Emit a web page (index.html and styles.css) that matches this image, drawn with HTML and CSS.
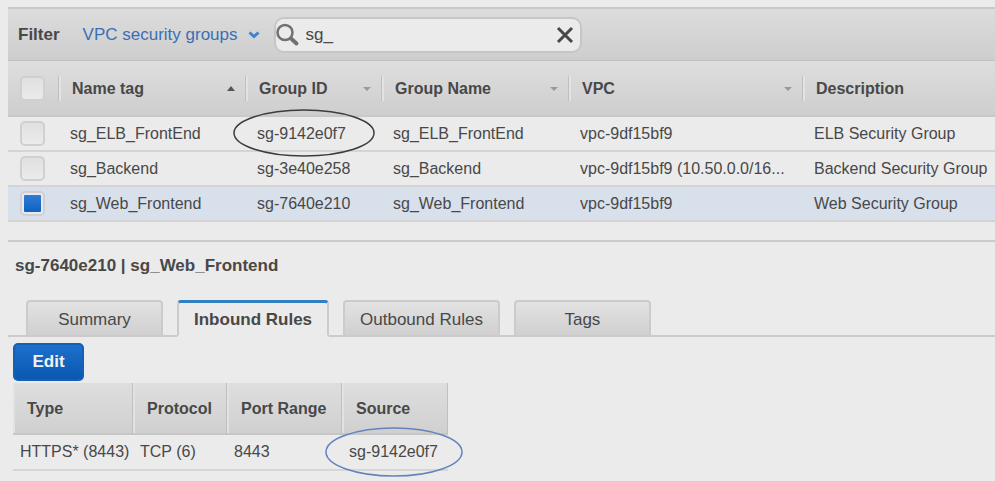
FILE: index.html
```html
<!DOCTYPE html>
<html lang="en">
<head>
<meta charset="utf-8">
<title>VPC security groups</title>
<link rel="stylesheet" href="styles.css">
</head>
<body>
<main class="console">
  <form class="filter-bar">
    <span class="filter-label">Filter</span>
    <button type="button" class="filter-type">VPC security groups
      <svg class="chevron" viewBox="0 0 12 8" aria-hidden="true"><path d="M1.5 1.5 L6 5.5 L10.5 1.5"/></svg>
    </button>
    <div class="search">
      <svg class="search-icon" viewBox="0 0 24 24" aria-hidden="true"><circle cx="9" cy="9.5" r="7.5"/><path class="handle" d="M15 15.5 L20.5 20.5"/></svg>
      <input class="search-input" type="text" value="sg_" aria-label="Search security groups">
      <button type="button" class="search-clear" aria-label="Clear search">
        <svg viewBox="0 0 18 18" aria-hidden="true"><path d="M2 2 L16 16 M16 2 L2 16"/></svg>
      </button>
    </div>
  </form>

  <table class="groups">
    <colgroup>
      <col class="col-check"><col class="col-tag"><col class="col-id"><col class="col-name"><col class="col-vpc"><col>
    </colgroup>
    <thead>
      <tr>
        <th class="check"><input type="checkbox" class="box" aria-label="Select all"></th>
        <th><div class="head">Name tag<i class="sort sort-up"></i></div></th>
        <th><div class="head">Group ID<i class="sort"></i></div></th>
        <th><div class="head">Group Name<i class="sort"></i></div></th>
        <th><div class="head">VPC<i class="sort"></i></div></th>
        <th><div class="head">Description</div></th>
      </tr>
    </thead>
    <tbody>
      <tr>
        <td class="check"><input type="checkbox" class="box" aria-label="Select sg_ELB_FrontEnd"></td>
        <td>sg_ELB_FrontEnd</td>
        <td><span class="mark">sg-9142e0f7<svg class="ring" viewBox="0 0 142 48" aria-hidden="true"><ellipse cx="71" cy="24" rx="70" ry="23"/></svg></span></td>
        <td>sg_ELB_FrontEnd</td>
        <td>vpc-9df15bf9</td>
        <td>ELB Security Group</td>
      </tr>
      <tr>
        <td class="check"><input type="checkbox" class="box" aria-label="Select sg_Backend"></td>
        <td>sg_Backend</td>
        <td>sg-3e40e258</td>
        <td>sg_Backend</td>
        <td>vpc-9df15bf9 (10.50.0.0/16...</td>
        <td>Backend Security Group</td>
      </tr>
      <tr class="selected">
        <td class="check"><input type="checkbox" class="box" checked aria-label="Select sg_Web_Frontend"></td>
        <td>sg_Web_Frontend</td>
        <td>sg-7640e210</td>
        <td>sg_Web_Frontend</td>
        <td>vpc-9df15bf9</td>
        <td>Web Security Group</td>
      </tr>
    </tbody>
  </table>

  <section class="details">
    <h2 class="title">sg-7640e210 | sg_Web_Frontend</h2>
    <div class="tabs" role="tablist">
      <button class="tab" role="tab">Summary</button>
      <button class="tab active" role="tab" aria-selected="true">Inbound Rules</button>
      <button class="tab" role="tab">Outbound Rules</button>
      <button class="tab" role="tab">Tags</button>
    </div>
    <div class="panel">
      <button class="edit">Edit</button>
      <table class="rules">
        <colgroup>
          <col class="col-type"><col class="col-protocol"><col class="col-port"><col class="col-source">
        </colgroup>
        <thead>
          <tr><th>Type</th><th>Protocol</th><th>Port Range</th><th>Source</th></tr>
        </thead>
        <tbody>
          <tr>
            <td>HTTPS* (8443)</td>
            <td>TCP (6)</td>
            <td>8443</td>
            <td><span class="mark">sg-9142e0f7<svg class="ring ring-blue" viewBox="0 0 138 50" aria-hidden="true"><ellipse cx="69" cy="25" rx="68" ry="24"/></svg></span></td>
          </tr>
        </tbody>
      </table>
    </div>
  </section>
</main>
</body>
</html>
```
FILE: styles.css
```css
* {
  box-sizing: border-box;
}

body {
  margin: 0;
  min-height: 100vh;
  background: #ebebeb;
  color: #484848;
  font: 16px/20px "Liberation Sans", Arial, sans-serif;
}

button,
input {
  font: inherit;
  color: inherit;
  margin: 0;
}

.console {
  padding: 7px 0 0 8px;
}

.filter-bar {
  display: flex;
  align-items: center;
  height: 54px;
  padding: 1px 10px 0;
  border-top: 2px solid #c8c8c8;
  border-bottom: 1px solid #c0c0c0;
  background: linear-gradient(#dcdcdd, #cecece);
}

.filter-label {
  font-size: 17px;
  font-weight: bold;
  margin-right: 23px;
}

.filter-type {
  display: flex;
  align-items: center;
  gap: 10px;
  padding: 0;
  border: 0;
  background: none;
  color: #3a6fb4;
  font-size: 17px;
  white-space: nowrap;
}

.chevron {
  width: 12px;
  height: 8px;
  fill: none;
  stroke: #3d86cf;
  stroke-width: 3;
}

.search {
  display: flex;
  align-items: center;
  width: 308px;
  height: 36px;
  margin-left: 14px;
  border: 2px solid #c6c6c6;
  border-radius: 10px;
  background: #ebebeb;
}

.search-icon {
  flex: none;
  width: 24px;
  height: 24px;
  fill: none;
  stroke: #717171;
  stroke-width: 2.5;
}

.handle {
  stroke-width: 4;
  stroke-linecap: round;
}

.search-input {
  flex: 1;
  min-width: 0;
  padding: 0 6px;
  border: 0;
  outline: 0;
  background: none;
  font-size: 17px;
}

.search-clear {
  display: flex;
  padding: 0 6px;
  border: 0;
  background: none;
}

.search-clear svg {
  width: 18px;
  height: 18px;
  fill: none;
  stroke: #484848;
  stroke-width: 3;
}

table {
  border-collapse: separate;
  border-spacing: 0;
}

th,
td {
  text-align: left;
  white-space: nowrap;
}

.groups {
  width: 100%;
  table-layout: fixed;
}

.col-check { width: 50px; }
.col-tag { width: 187px; }
.col-id { width: 136px; }
.col-name { width: 187px; }
.col-vpc { width: 234px; }

.groups th {
  height: 56px;
  padding: 1px 0 0;
  border-bottom: 2px solid #c8c8c8;
  background: linear-gradient(#dedede, #cecece);
}

.groups td {
  height: 35px;
  padding: 0 0 0 12px;
  border-bottom: 2px solid #d4d4d4;
}

.groups .selected td {
  background: #d8e0ec;
}

.groups .check {
  padding: 0 0 0 12px;
}

.head {
  display: flex;
  align-items: center;
  justify-content: space-between;
  height: 25px;
  padding: 0 10px 0 13px;
  border-left: 1px solid #c0c0c0;
  box-shadow: inset 2px 0 #e2e2e2;
}

.sort {
  border: 4px solid transparent;
  border-top-color: #999;
  border-bottom: 0;
}

.sort-up {
  border-top: 0;
  border-bottom: 5px solid #555;
}

.box {
  appearance: none;
  display: block;
  width: 25px;
  height: 25px;
  padding: 2px;
  border: 2px solid #d0d0d0;
  border-radius: 5px;
  background: linear-gradient(#e0e0e0, #ebebeb);
}

.box:checked {
  background: linear-gradient(#2f7cd6, #0f62bd) content-box, #e6eaf0;
}

.mark {
  position: relative;
}

.ring {
  position: absolute;
  left: -24px;
  top: -16px;
  width: 142px;
  height: 48px;
  fill: none;
  stroke: #3c3c3c;
  stroke-width: 1.5;
}

.ring-blue {
  width: 138px;
  height: 50px;
  stroke: #6483be;
}

.details {
  margin-top: 18px;
  border-top: 2px solid #cbcbcb;
}

.title {
  margin: 14px 0 24px 7px;
  font-size: 17px;
  line-height: 20px;
}

.tabs {
  display: flex;
  gap: 14px;
  padding-left: 18px;
  border-bottom: 2px solid #cbcbcb;
}

.tab {
  min-width: 137px;
  height: 37px;
  margin-bottom: -2px;
  padding: 2px 15px 0;
  border: 2px solid #cbcbcb;
  border-radius: 4px 4px 0 0;
  background: linear-gradient(#e2e2e2, #d0d0d0);
  font-size: 17px;
}

.active {
  border-top: 3px solid #337fc4;
  border-bottom-color: #ebebeb;
  background: #ebebeb;
  font-weight: bold;
}

.panel {
  padding: 6px 0 0 5px;
}

.edit {
  display: block;
  width: 71px;
  height: 38px;
  border: 2px solid #1460b4;
  border-radius: 5px;
  background: linear-gradient(#1c70cc, #0a58b0);
  color: #f2f2f2;
  font-size: 17px;
  font-weight: bold;
}

.rules {
  margin-top: 2px;
}

.col-type { width: 120px; }
.col-protocol { width: 94px; }
.col-port { width: 115px; }
.col-source { width: 106px; }

.rules th {
  height: 52px;
  padding: 2px 0 0 14px;
  border-right: 1px solid #c0c0c0;
  border-bottom: 2px solid #c6c6c6;
  box-shadow: inset 2px 0 #e2e2e2;
  background: linear-gradient(#dedede, #d0d0d0);
}

.rules td {
  height: 36px;
  padding: 0 0 0 7px;
  border-bottom: 2px solid #d6d6d6;
}
```
